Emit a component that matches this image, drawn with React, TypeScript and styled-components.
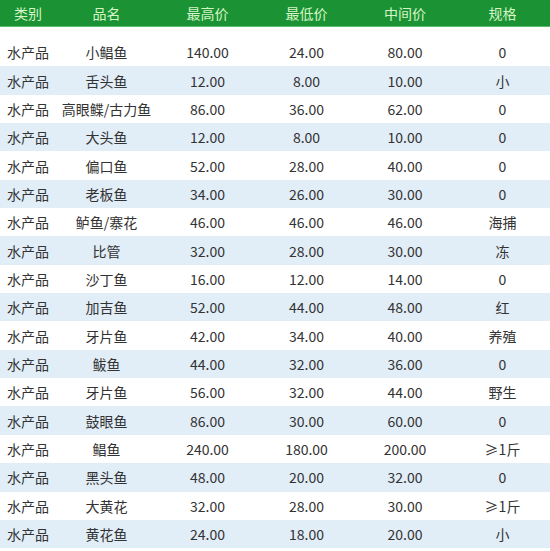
import React from 'react'
import styled, { createGlobalStyle } from 'styled-components'

const GlobalStyle = createGlobalStyle`
  html, body {
    margin: 0;
    padding: 0;
    background: #ffffff;
  }
  body {
    font-family: "Noto Sans CJK SC", "Noto Sans", sans-serif;
  }
`

type Row = [string, string, string, string, string, string]

const rows: Row[] = [
  ['水产品', '小鲳鱼', '140.00', '24.00', '80.00', '0'],
  ['水产品', '舌头鱼', '12.00', '8.00', '10.00', '小'],
  ['水产品', '高眼鲽/古力鱼', '86.00', '36.00', '62.00', '0'],
  ['水产品', '大头鱼', '12.00', '8.00', '10.00', '0'],
  ['水产品', '偏口鱼', '52.00', '28.00', '40.00', '0'],
  ['水产品', '老板鱼', '34.00', '26.00', '30.00', '0'],
  ['水产品', '鲈鱼/寨花', '46.00', '46.00', '46.00', '海捕'],
  ['水产品', '比管', '32.00', '28.00', '30.00', '冻'],
  ['水产品', '沙丁鱼', '16.00', '12.00', '14.00', '0'],
  ['水产品', '加吉鱼', '52.00', '44.00', '48.00', '红'],
  ['水产品', '牙片鱼', '42.00', '34.00', '40.00', '养殖'],
  ['水产品', '鲅鱼', '44.00', '32.00', '36.00', '0'],
  ['水产品', '牙片鱼', '56.00', '32.00', '44.00', '野生'],
  ['水产品', '鼓眼鱼', '86.00', '30.00', '60.00', '0'],
  ['水产品', '鲳鱼', '240.00', '180.00', '200.00', '≥1斤'],
  ['水产品', '黑头鱼', '48.00', '20.00', '32.00', '0'],
  ['水产品', '大黄花', '32.00', '28.00', '30.00', '≥1斤'],
  ['水产品', '黄花鱼', '24.00', '18.00', '20.00', '小'],
]

const headers = ['类别', '品名', '最高价', '最低价', '中间价', '规格']

const columns = '56px 101px 101px 97px 100px 1fr'

const Page = styled.div`
  width: 550px;
  height: 551px;
  overflow: hidden;
  background: #ffffff;
`

const Header = styled.div`
  display: grid;
  grid-template-columns: ${columns};
  height: 26px;
  background: #1b9334;
  border-bottom: 1px solid #5dbb6c;
`

const HeadCell = styled.div`
  display: flex;
  align-items: center;
  justify-content: center;
  color: #d6f5c6;
  font-size: 14px;
`

const Body = styled.div`
  padding-top: 11px;
`

const DataRow = styled.div<{ $shaded: boolean }>`
  display: grid;
  grid-template-columns: ${columns};
  height: 28.35px;
  background: ${p => (p.$shaded ? '#e1edf7' : '#ffffff')};
`

const Cell = styled.div`
  display: flex;
  align-items: center;
  justify-content: center;
  color: #333333;
  font-size: 14px;
  white-space: nowrap;
`

const App: React.FC = () => {
  return (
    <Page>
      <GlobalStyle />
      <Header>
        {headers.map(h => (
          <HeadCell key={h}>{h}</HeadCell>
        ))}
      </Header>
      <Body>
        {rows.map((r, i) => (
          <DataRow key={i} $shaded={i % 2 === 1}>
            {r.map((c, j) => (
              <Cell key={j}>{c}</Cell>
            ))}
          </DataRow>
        ))}
      </Body>
    </Page>
  )
}

export default App
